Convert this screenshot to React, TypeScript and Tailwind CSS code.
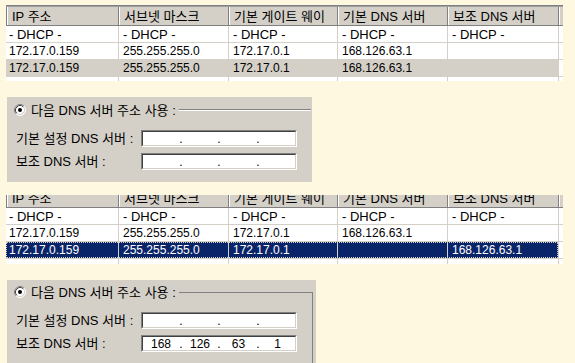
import React from "react";

const W = ["w-[112px]", "w-[110px]", "w-[109px]", "w-[110px]", "w-[111px]"];
const HEAD = ["IP 주소", "서브넷 마스크", "기본 게이트 웨이", "기본 DNS 서버", "보조 DNS 서버"];
const DHCP = ["- DHCP -", "- DHCP -", "- DHCP -", "- DHCP -", "- DHCP -"];

const ROWS_TOP = [
  DHCP,
  ["172.17.0.159", "255.255.255.0", "172.17.0.1", "168.126.63.1", ""],
  ["172.17.0.159", "255.255.255.0", "172.17.0.1", "168.126.63.1", ""],
];
const ROWS_BOTTOM = [
  DHCP,
  ["172.17.0.159", "255.255.255.0", "172.17.0.1", "168.126.63.1", ""],
  ["172.17.0.159", "255.255.255.0", "172.17.0.1", "", "168.126.63.1"],
];

function Header() {
  return (
    <div className="flex h-[18px] bg-[#d4d0c8] text-[13px]">
      {HEAD.map((h, i) => (
        <div
          key={i}
          className={`${W[i]} flex items-center whitespace-nowrap overflow-hidden border-l border-[#808080] shadow-[inset_1px_0_0_#ffffff] pl-[5px]`}
        >
          {h}
        </div>
      ))}
      <div className="w-[5px] border-l border-[#808080] shadow-[inset_1px_0_0_#ffffff]" />
    </div>
  );
}

function Row({ cells, sel }: { cells: string[]; sel?: "gray" | "blue" }) {
  const bg =
    sel === "gray"
      ? "bg-[#d4d0c8]"
      : sel === "blue"
      ? "bg-[#0a246a] text-white outline-1 outline-dotted outline-[#d4d0c8] -outline-offset-1"
      : "";
  return (
    <div className="flex h-[17px] border-b border-[#d4d0c8]">
      <div className={`flex ${bg}`}>
        {cells.map((c, i) => (
          <div
            key={i}
            className={`${W[i]} flex items-center whitespace-nowrap ${
              c.includes("DHCP") ? "text-[13px]" : "text-[12px]"
            } ${i === 0 ? "pl-[3px]" : "border-l border-[#d4d0c8] pl-[4px]"}`}
          >
            {c}
          </div>
        ))}
      </div>
      <div className="w-[5px] border-l border-[#d4d0c8]" />
    </div>
  );
}

function PartialRow({ h }: { h: string }) {
  return (
    <div className={`flex ${h}`}>
      {W.map((w, i) => (
        <div key={i} className={`${w} ${i === 0 ? "" : "border-l border-[#d4d0c8]"}`} />
      ))}
      <div className="w-[5px] border-l border-[#d4d0c8]" />
    </div>
  );
}

function Radio() {
  return (
    <svg width="12" height="12" viewBox="0 0 12 12" className="shrink-0">
      <circle cx="6" cy="6" r="5" fill="#ffffff" />
      <path d="M9.89 2.11 A5.5 5.5 0 0 0 2.11 9.89" stroke="#808080" fill="none" />
      <path d="M2.11 9.89 A5.5 5.5 0 0 0 9.89 2.11" stroke="#ffffff" fill="none" />
      <path d="M9.18 2.82 A4.5 4.5 0 0 0 2.82 9.18" stroke="#404040" fill="none" />
      <path d="M2.82 9.18 A4.5 4.5 0 0 0 9.18 2.82" stroke="#d4d0c8" fill="none" />
      <circle cx="6" cy="6" r="2" fill="#000000" />
    </svg>
  );
}

const SEG = ["w-[36px]", "w-[34px]", "w-[35px]", "w-[35px]"];

function IpInput({ value }: { value?: string[] }) {
  const segs = value ?? ["", "", "", ""];
  return (
    <div className="flex h-[17px] w-[156px] border border-t-[#808080] border-l-[#808080] border-b-white border-r-white">
      <div className="flex flex-1 bg-white border border-t-[#404040] border-l-[#404040] border-b-[#d4d0c8] border-r-[#d4d0c8]">
        {segs.map((s, i) => (
          <React.Fragment key={i}>
            {i > 0 && <div className="w-[4px] flex items-center justify-center">.</div>}
            <div className={`${SEG[i]} flex items-center justify-center`}>{s}</div>
          </React.Fragment>
        ))}
      </div>
    </div>
  );
}

function DnsBox({
  box,
  titleMt,
  frame,
  second,
}: {
  box: string;
  titleMt: string;
  frame?: boolean;
  second?: string[];
}) {
  return (
    <div className={`flex flex-col bg-[#d4d0c8] ${box}`}>
      <div className={`flex items-center h-[14px] ${titleMt}`}>
        <div className="ml-[7px]">
          <Radio />
        </div>
        <span className="ml-[5px] whitespace-nowrap text-[13px]">다음 DNS 서버 주소 사용 :</span>
        {frame ? (
          <div className="flex-1 self-end h-[7px] ml-[3px] mr-[3px] border-t border-r border-t-[#808080] border-r-[#808080]" />
        ) : (
          <div className="flex-1 h-[2px] ml-[3px] mr-[1px] border-t border-b border-t-[#808080] border-b-white" />
        )}
      </div>
      <div className={`flex-1 ${frame ? "mr-[3px] border-r border-[#808080]" : ""}`}>
        <div className="flex items-center mt-[13px]">
          <div className="w-[125px] ml-[9px] whitespace-nowrap text-[13px]">기본 설정 DNS 서버 :</div>
          <IpInput />
        </div>
        <div className="flex items-center mt-[6px]">
          <div className="w-[125px] ml-[9px] whitespace-nowrap text-[13px]">보조 DNS 서버 :</div>
          <IpInput value={second} />
        </div>
      </div>
    </div>
  );
}

export default function App() {
  return (
    <div className="flex flex-col w-[575px] h-[363px] overflow-hidden bg-[#fff8e1] text-[12px] leading-none text-black font-['Liberation_Sans','Noto_Sans_CJK_KR',sans-serif]">
      {/* top list */}
      <div className="ml-[6px] mt-[5px] w-[557px]">
        <div className="h-px bg-[#808080]" />
        <div className="h-px bg-[#a0a0a0]" />
        <div className="border-b border-[#808080]">
          <Header />
        </div>
        <div className="bg-white">
          <Row cells={ROWS_TOP[0]} />
          <Row cells={ROWS_TOP[1]} />
          <Row cells={ROWS_TOP[2]} sel="gray" />
          <PartialRow h="h-[4px]" />
        </div>
      </div>

      <DnsBox box="ml-[7px] mt-[16px] w-[305px] h-[85px]" titleMt="mt-[6px]" />

      {/* bottom list, header scrolled partly out of view */}
      <div className="ml-[6px] mt-[13px] w-[557px]">
        <div className="h-[13px] overflow-hidden border-b border-[#808080]">
          <div className="-mt-[6px]">
            <Header />
          </div>
        </div>
        <div className="bg-white">
          <Row cells={ROWS_BOTTOM[0]} />
          <Row cells={ROWS_BOTTOM[1]} />
          <Row cells={ROWS_BOTTOM[2]} sel="blue" />
          <PartialRow h="h-[5px]" />
        </div>
      </div>

      <DnsBox
        box="ml-[7px] mt-[16px] w-[309px] h-[83px]"
        titleMt="mt-[5px]"
        frame
        second={["168", "126", "63", "1"]}
      />
    </div>
  );
}
